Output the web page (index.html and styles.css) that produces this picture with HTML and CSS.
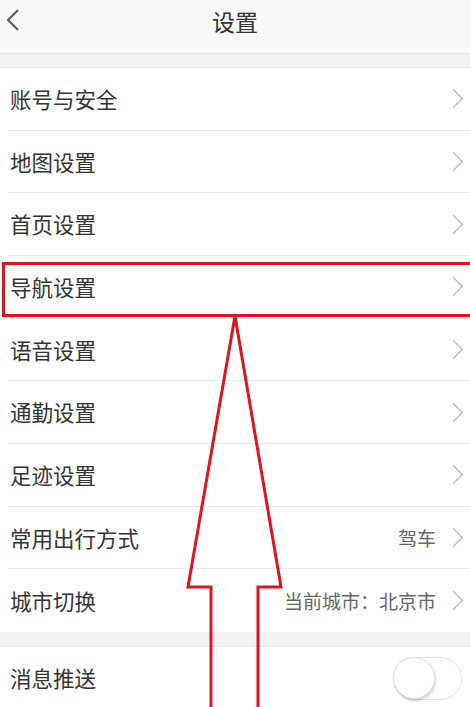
FILE: index.html
```html
<!DOCTYPE html>
<html lang="zh-CN">
<head>
<meta charset="utf-8">
<title>设置</title>
<link rel="stylesheet" href="styles.css">
</head>
<body>
<div class="page">
  <header class="topbar">
    <svg class="back" width="14" height="22" viewBox="0 0 14 22"><polyline points="12,1 2,11 12,21" fill="none" stroke="#555" stroke-width="2"/></svg>
    <h1 class="title">设置</h1>
  </header>
  <div class="gap"></div>
  <ul class="group">
    <li class="row"><span class="label">账号与安全</span><span class="chev"></span></li>
    <li class="row"><span class="label">地图设置</span><span class="chev"></span></li>
    <li class="row"><span class="label">首页设置</span><span class="chev"></span></li>
    <li class="row"><span class="label">导航设置</span><span class="chev"></span></li>
    <li class="row"><span class="label">语音设置</span><span class="chev"></span></li>
    <li class="row"><span class="label">通勤设置</span><span class="chev"></span></li>
    <li class="row"><span class="label">足迹设置</span><span class="chev"></span></li>
    <li class="row"><span class="label">常用出行方式</span><span class="value">驾车</span><span class="chev"></span></li>
    <li class="row last"><span class="label">城市切换</span><span class="value">当前城市：北京市</span><span class="chev"></span></li>
  </ul>
  <div class="gap gap2"></div>
  <ul class="group">
    <li class="row last"><span class="label">消息推送</span><span class="toggle"><span class="knob"></span></span></li>
  </ul>

  <div class="highlight"></div>
  <svg class="arrow" width="470" height="707" viewBox="0 0 470 707">
    <polygon points="235,316 188,587 211,587 211,712 258,712 258,587 281,587" fill="none" stroke="#e0141e" stroke-width="3" stroke-linejoin="miter"/>
  </svg>
</div>
</body>
</html>
```
FILE: styles.css
```css
* { box-sizing: border-box; }
html, body {
  margin: 0;
  padding: 0;
  background: #fff;
  font-family: "Noto Sans CJK SC", "Noto Sans", sans-serif;
  color: #333;
}
.page {
  position: relative;
  width: 470px;
  height: 707px;
  overflow: hidden;
}
.topbar {
  height: 54px;
  background: #f8f8f8;
  border-bottom: 1px solid #e4e4e4;
  display: flex;
  align-items: center;
  justify-content: center;
  position: relative;
}
.back {
  position: absolute;
  left: 6px;
  top: 9px;
}
.title {
  margin: 0 0 10px;
  font-size: 23px;
  font-weight: normal;
  color: #333;
  line-height: 1;
}
.gap {
  height: 14px;
  background: #f2f2f2;
  border-bottom: 1px solid #e6e6e6;
}
.gap2 {
  height: 15px;
}
.group {
  list-style: none;
  margin: 0;
  padding: 0 0 0 8px;
  background: #fff;
}
.row {
  height: 62.67px;
  display: flex;
  align-items: center;
  padding-left: 2px;
  padding-right: 7px;
  border-bottom: 1px solid #ececec;
}
.row.last { border-bottom: 0; }
.label {
  flex: 1;
  font-size: 21.5px;
  color: #333;
  line-height: 1;
}
.value {
  font-size: 19px;
  color: #666;
  margin-right: 12px;
  line-height: 1;
}
.chev {
  width: 11px;
  height: 11px;
  border-top: 1.5px solid #bdbdbd;
  border-right: 1.5px solid #bdbdbd;
  transform: rotate(45deg) scale(1.25, 1.25);
  margin-right: 4px;
}
.toggle {
  width: 69px;
  height: 43px;
  border-radius: 22px;
  border: 1.5px solid #e2e2e2;
  background: #fff;
  position: relative;
  margin-right: 1px;
}
.knob {
  position: absolute;
  left: -1px;
  top: -1px;
  width: 42px;
  height: 42px;
  border-radius: 50%;
  background: #fff;
  border: 1px solid #e0e0e0;
  box-shadow: 1px 2px 3px rgba(0,0,0,0.18);
}
.highlight {
  position: absolute;
  left: 2px;
  top: 262px;
  width: 472px;
  height: 55px;
  border: 3px solid #e0141e;
}
.arrow {
  position: absolute;
  left: 0;
  top: 0;
}
```
